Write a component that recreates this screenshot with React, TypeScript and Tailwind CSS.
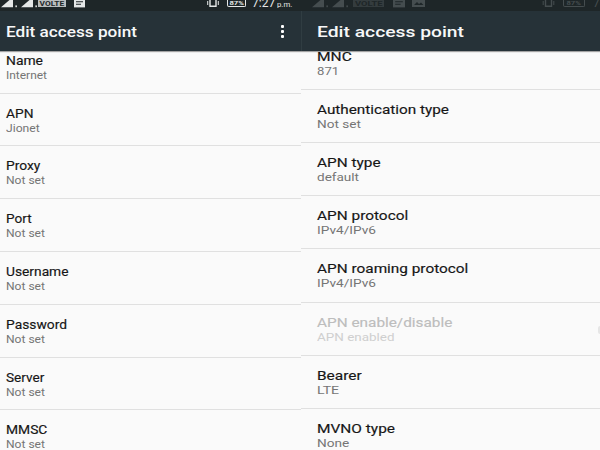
import { useLayoutEffect, useRef, useState } from "react";

type Item = { title: string; tw: number; sub: string; sw: number; disabled?: boolean };

const left: Item[] = [
  { title: "Name", tw: 37, sub: "Internet", sw: 41 },
  { title: "APN", tw: 27.5, sub: "Jionet", sw: 33.5 },
  { title: "Proxy", tw: 34.5, sub: "Not set", sw: 39 },
  { title: "Port", tw: 26, sub: "Not set", sw: 39 },
  { title: "Username", tw: 62, sub: "Not set", sw: 39 },
  { title: "Password", tw: 61, sub: "Not set", sw: 39 },
  { title: "Server", tw: 38.5, sub: "Not set", sw: 39 },
  { title: "MMSC", tw: 41.5, sub: "Not set", sw: 39 },
];

const right: Item[] = [
  { title: "MNC", tw: 35, sub: "871", sw: 22.5 },
  { title: "Authentication type", tw: 132.5, sub: "Not set", sw: 44 },
  { title: "APN type", tw: 64, sub: "default", sw: 42.5 },
  { title: "APN protocol", tw: 91, sub: "IPv4/IPv6", sw: 58.5 },
  { title: "APN roaming protocol", tw: 151, sub: "IPv4/IPv6", sw: 58.5 },
  { title: "APN enable/disable", tw: 135.5, sub: "APN enabled", sw: 78, disabled: true },
  { title: "Bearer", tw: 45, sub: "LTE", sw: 21.5 },
  { title: "MVNO type", tw: 78.5, sub: "None", sw: 32.5 },
];

// Stretches a line of text horizontally to the given width.
function Wide({ text, width, className }: { text: string; width: number; className: string }) {
  const ref = useRef<HTMLSpanElement>(null);
  const [scale, setScale] = useState(1);
  useLayoutEffect(() => {
    if (ref.current) setScale(width / ref.current.offsetWidth);
  }, [width]);
  return (
    <span ref={ref} className={`block w-max origin-left whitespace-nowrap ${className}`} style={{ transform: `scaleX(${scale})` }}>
      {text}
    </span>
  );
}

function Signal() {
  return (
    <svg className="h-[10px] w-[17px] shrink-0" viewBox="0 0 17 10">
      <path d="M0 7.2L12 -3V7.2Z" fill="currentColor" />
      <rect x="14.4" y="5.4" width="1.5" height="1.8" fill="currentColor" />
    </svg>
  );
}

function StatusBar({ dim }: { dim?: boolean }) {
  return (
    <div className={`flex h-[11px] shrink-0 items-start overflow-hidden bg-[#1e2628] ${dim ? "pl-[11px] text-[#454d4f]" : "pl-px text-[#e4e7e7]"}`}>
      <Signal />
      <div className="w-[3px] shrink-0" />
      <Signal />
      <div className={`flex h-[7px] shrink-0 items-center justify-center overflow-hidden ${dim ? "ml-[4px] w-[31px] bg-[#343c3e] text-[#1e2628]" : "w-[28px] bg-[#b9bdbd] text-[#1e2628]"}`}>
        <Wide text="VOLTE" width={dim ? 28 : 25} className="origin-center! text-[8px] leading-[7px] font-bold" />
      </div>
      <svg className={`h-[8px] shrink-0 ${dim ? "ml-[9px] w-[12px]" : "ml-[8px] w-[11px]"}`} viewBox="0 0 11 8" preserveAspectRatio="none">
        <path d="M0 0H11V7.4H0Z" fill="currentColor" />
        <path d="M2 1.8H9M2 4.2H7" stroke="#1e2628" strokeWidth="1.1" />
      </svg>
      {dim && (
        <svg className="ml-[7px] h-[8px] w-[13px] shrink-0" viewBox="0 0 13 8">
          <path d="M0 0H13V7H0Z" fill="currentColor" />
          <path d="M2 5L5 2L7 4L9 2.5L11.5 5Z" fill="#1e2628" />
        </svg>
      )}
      <svg className={`h-[8px] shrink-0 ${dim ? "ml-[117px] w-[13px]" : "ml-[122px] w-[12px]"}`} viewBox="0 0 12 8" fill="none" stroke="currentColor">
        <path d="M3 -2V6.3H9V-2" strokeWidth="1.4" />
        <path d="M.7 1V5M11.3 1V5" />
      </svg>
      <div className={`flex h-[7px] shrink-0 items-center justify-center rounded-b-[2px] border border-t-0 border-current ${dim ? "ml-[8px] w-[22px]" : "ml-[8px] w-[19px]"}`}>
        <Wide text="87%" width={14} className="origin-center! text-[6px] leading-[6px] font-bold" />
      </div>
      <div className={`-mt-[4px] w-[24px] shrink-0 ${dim ? "ml-[8px]" : "ml-[6px]"}`}>
        <Wide text="7:27" width={23} className="text-[12px] leading-[14px]" />
      </div>
      <div className="ml-px shrink-0">
        <Wide text="p.m." width={15.5} className="text-[8px] leading-[9px]" />
      </div>
    </div>
  );
}

function Row({ item, wide }: { item: Item; wide?: boolean }) {
  const title = item.disabled ? "text-[#bdbdbd]" : "text-[#161616]";
  const sub = item.disabled ? "text-[#cfcfcf]" : "text-[#757575]";
  return (
    <div className={`shrink-0 border-b border-[#e0e0e0] ${wide ? "h-[53.15px] pt-[13px] pl-[15.5px]" : "h-[52.8px] pt-[13px] pl-1.5"}`}>
      <Wide text={item.title} width={item.tw} className={`text-[12px] leading-[15px] font-[450] [-webkit-text-stroke:0.15px_currentColor] ${title}`} />
      <div className="flex items-center justify-between">
        <Wide text={item.sub} width={item.sw} className={`text-[10.5px] leading-[14px] ${sub}`} />
        {item.disabled && <div className="-mt-4 h-2 w-[2px] rounded-l-full bg-[#e6e6e6]" />}
      </div>
    </div>
  );
}

function Header({ wide }: { wide?: boolean }) {
  return (
    <div className={`z-10 flex h-10 shrink-0 items-center justify-between bg-[#263238] pt-px shadow-[0_1px_1px_rgba(0,0,0,0.35)] ${wide ? "border-l border-[#303d42] pl-[14.5px]" : "pl-1.5"}`}>
      <Wide text="Edit access point" width={wide ? 146.5 : 130.5} className="text-[15px] leading-[20px] font-medium text-[#f7f8f8]" />
      {!wide && (
        <div className="mr-[17px] flex flex-col gap-[2px]">
          <div className="h-[3px] w-[3px] rounded-[1px] bg-white" />
          <div className="h-[3px] w-[3px] rounded-[1px] bg-white" />
          <div className="h-[3px] w-[3px] rounded-[1px] bg-white" />
        </div>
      )}
    </div>
  );
}

export default function App() {
  return (
    <div className="flex h-[450px] w-[600px] overflow-hidden bg-[#fafafa] font-[Roboto,sans-serif]">
      <div className="flex w-[301px] shrink-0 flex-col overflow-hidden">
        <StatusBar />
        <Header />
        <div className="-mt-[10.2px] flex flex-col">
          {left.map((item) => (
            <Row key={item.title} item={item} />
          ))}
        </div>
      </div>
      <div className="flex w-[299px] shrink-0 flex-col overflow-hidden">
        <StatusBar dim />
        <Header wide />
        <div className="-mt-[14.1px] flex flex-col">
          {right.map((item) => (
            <Row key={item.title} item={item} wide />
          ))}
        </div>
      </div>
    </div>
  );
}
